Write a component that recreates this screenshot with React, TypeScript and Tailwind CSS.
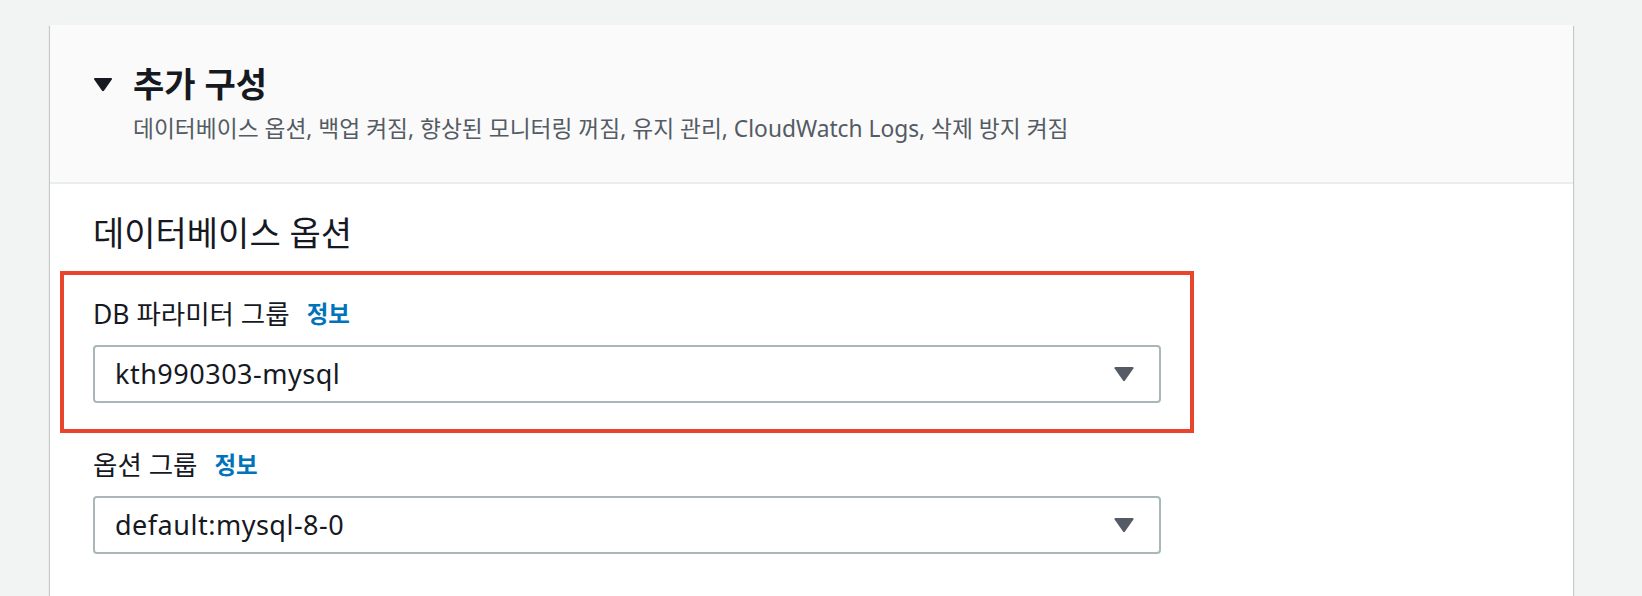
import React from "react";

const FONT = "font-['Noto_Sans','Noto_Sans_CJK_KR',sans-serif]";

function Caret({ className }: { className?: string }) {
  return (
    <svg viewBox="0 0 20 16" className={className} fill="currentColor">
      <path d="M1.5 1h17c1 0 1.4.8.9 1.6L11 14.6c-.5.7-1.5.7-2 0L.6 2.6C.1 1.8.5 1 1.5 1z" />
    </svg>
  );
}

function SelectField({
  label,
  value,
}: {
  label: string;
  value: string;
}) {
  return (
    <div>
      <div className="flex items-center h-[30px]">
        <span className="text-[26.5px] leading-[30px] text-[#16191f]">{label}</span>
        <a className="ml-[17px] text-[23.5px] leading-[30px] font-bold text-[#0073bb]">
          정보
        </a>
      </div>
      <div className="mt-[16px] flex h-[58px] w-[1068px] items-center justify-between rounded-[4px] border-2 border-[#aab7b8] bg-white pl-[20px] pr-[25px]">
        <span className="text-[27px] tracking-[0.5px] text-[#16191f]">{value}</span>
        <Caret className="h-[16px] w-[20px] text-[#545b64]" />
      </div>
    </div>
  );
}

export default function App() {
  return (
    <div className={`min-h-screen bg-[#f2f3f3] pl-[50px] pr-[69px] pt-[25px] ${FONT}`}>
      <div className="min-h-[600px] bg-white shadow-[0_1px_1px_0_rgba(0,28,36,0.3),1px_1px_1px_0_rgba(0,28,36,0.15),-1px_1px_1px_0_rgba(0,28,36,0.15)]">
        <div className="border-b-2 border-[#eaeded] bg-[#fafafa] pl-[43px] pr-[40px] pt-[39px] pb-[39px]">
          <div className="flex items-center h-[40px]">
            <Caret className="h-[15px] w-[20px] text-[#16191f]" />
            <h2 className="ml-[20px] text-[34px] leading-[40px] font-bold text-[#16191f]">
              추가 구성
            </h2>
          </div>
          <p className="mt-[11px] pl-[40px] text-[22.75px] leading-[28px] text-[#545b64]">
            데이터베이스 옵션, 백업 켜짐, 향상된 모니터링 꺼짐, 유지 관리, CloudWatch Logs, 삭제 방지 켜짐
          </p>
        </div>
        <div className="pl-[43px] pt-[29px] pb-[40px]">
          <h3 className="text-[34px] leading-[40px] font-normal text-[#16191f]">
            데이터베이스 옵션
          </h3>
          <div className="mt-[18px] -ml-[33px] w-[1134px] border-4 border-[#e8452c] pl-[29px] pt-[24px] pb-[26px]">
            <SelectField label="DB 파라미터 그룹" value="kth990303-mysql" />
          </div>
          <div className="mt-[17px]">
            <SelectField label="옵션 그룹" value="default:mysql-8-0" />
          </div>
        </div>
      </div>
    </div>
  );
}
